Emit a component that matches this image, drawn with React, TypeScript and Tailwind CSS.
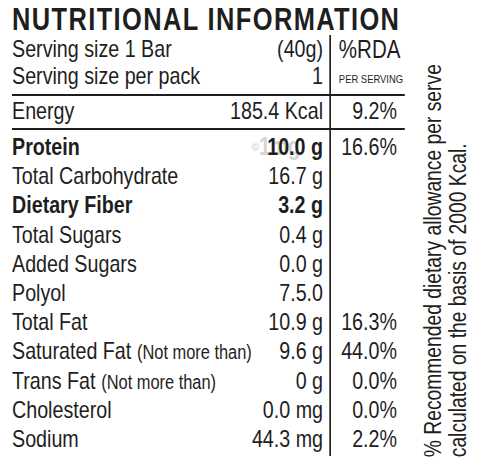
const rows = [
  { label: "Protein", value: "10.0 g", rda: "16.6%", bold: true, mark: true },
  { label: "Total Carbohydrate", value: "16.7 g", rda: "" },
  { label: "Dietary Fiber", value: "3.2 g", rda: "", bold: true },
  { label: "Total Sugars", value: "0.4 g", rda: "" },
  { label: "Added Sugars", value: "0.0 g", rda: "" },
  { label: "Polyol", value: "7.5.0", rda: "" },
  { label: "Total Fat", value: "10.9 g", rda: "16.3%" },
  { label: "Saturated Fat", note: "(Not more than)", value: "9.6 g", rda: "44.0%" },
  { label: "Trans Fat", note: "(Not more than)", value: "0 g", rda: "0.0%" },
  { label: "Cholesterol", value: "0.0 mg", rda: "0.0%" },
  { label: "Sodium", value: "44.3 mg", rda: "2.2%" },
];

// the label is set in a condensed face; we squeeze Liberation Sans horizontally
export default function App() {
  return (
    <div className="w-[480px] h-[465px] overflow-hidden bg-white text-[#1e1e1e] font-['Liberation_Sans',Arial,sans-serif]">
      <div className="flex pl-[12px]">
        <div className="w-[393px] shrink-0">
          <div className="w-[479.3px] origin-left scale-x-[0.82]">
            <div className="pt-[4px] text-[31px] leading-[31px] font-bold tracking-[1.7px] whitespace-nowrap">
              NUTRITIONAL INFORMATION
            </div>

            <div className="flex border-b-2 border-[#1e1e1e]">
              <div className="w-[386.6px] pr-[7.3px] pb-[5px] text-[24px]">
                <div className="flex justify-between h-[27px] leading-[27px]">
                  <span>Serving size 1 Bar</span>
                  <span>(40g)</span>
                </div>
                <div className="flex justify-between h-[27px] leading-[27px]">
                  <span>Serving size per pack</span>
                  <span>1</span>
                </div>
              </div>
              <div className="flex-1 border-l-[2.4px] border-[#1e1e1e] pl-[10px]">
                <div className="h-[27px] leading-[29px] text-[25px]">%RDA</div>
                <div className="h-[27px] leading-[34px] text-[11.5px] whitespace-nowrap">PER SERVING</div>
              </div>
            </div>

            <div className="flex border-b-2 border-[#1e1e1e] text-[24px]">
              <div className="w-[386.6px] pr-[7.3px] h-[32px] leading-[29px] flex justify-between">
                <span>Energy</span>
                <span>185.4 Kcal</span>
              </div>
              <div className="flex-1 border-l-[2.4px] border-[#1e1e1e] pr-[9.8px] text-right leading-[29px]">9.2%</div>
            </div>

            <div className="flex text-[24px]">
              <div className="w-[386.6px] pr-[7.3px] pt-[2px] pb-[3px]">
                {rows.map((r) => (
                  <div key={r.label} className="relative flex justify-between h-[29.2px] leading-[29.2px] whitespace-nowrap">
                    <span className={r.bold ? "font-bold" : ""}>
                      {r.label}
                      {r.note && <span className="ml-[7px] text-[20px]">{r.note}</span>}
                    </span>
                    {r.mark && (
                      <span className="absolute left-[292px] top-0 text-[25px] font-bold text-[#d4d4d4] tracking-[-0.5px]">
                        <span className="text-[13px] align-top">©</span>1mg
                      </span>
                    )}
                    <span className={`relative ${r.bold ? "font-bold" : ""}`}>{r.value}</span>
                  </div>
                ))}
              </div>
              <div className="flex-1 border-l-[2.4px] border-[#1e1e1e] pr-[9.8px] pt-[2px] text-right">
                {rows.map((r) => (
                  <div key={r.label} className="h-[29.2px] leading-[29.2px]">{r.rda}</div>
                ))}
              </div>
            </div>
          </div>
        </div>

        <div className="ml-[16px] mt-[21px] w-[50px] shrink-0">
          <div className="[writing-mode:vertical-rl] rotate-180 scale-y-[0.82] text-[23.5px] leading-[25px] whitespace-nowrap">
            <div>% Recommended dietary allowance per serve</div>
            <div>calculated on the basis of 2000 Kcal.</div>
          </div>
        </div>
      </div>
    </div>
  );
}
